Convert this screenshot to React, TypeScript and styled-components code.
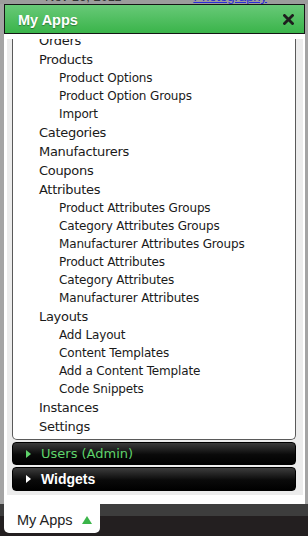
import React from "react";
import styled, { createGlobalStyle } from "styled-components";

const GlobalStyle = createGlobalStyle`
  html, body { margin: 0; padding: 0; }
  body {
    width: 308px;
    height: 536px;
    overflow: hidden;
    background: #a4a4a4;
    font-family: "DejaVu Sans", "Liberation Sans", sans-serif;
  }
`;

const Page = styled.div`
  display: flex;
  flex-direction: column;
  height: 536px;
`;

const BehindStrip = styled.div`
  height: 4px;
  overflow: hidden;
  background: #9c9c9c;
`;

const BehindRow = styled.div`
  display: flex;
  margin-top: -10px;
  height: 14px;
  font-family: "Liberation Sans", sans-serif;
  font-size: 13px;
  line-height: 14px;
`;

const BehindDate = styled.span`
  margin-left: 45px;
  color: #333;
`;

const BehindLink = styled.span`
  margin-left: 72px;
  color: #2b2bd6;
  text-decoration: underline;
`;

const Popup = styled.div`
  margin-left: 4px;
  width: 301px;
  display: flex;
  flex-direction: column;
`;

const Header = styled.div`
  box-sizing: border-box;
  height: 30px;
  border: 1px solid #151515;
  background: linear-gradient(#68c978, #3ab44a);
  display: flex;
  align-items: center;
  justify-content: space-between;
  padding: 1px 10px 0 13px;
`;

const Title = styled.span`
  color: #fff;
  font-family: "Liberation Sans", sans-serif;
  font-weight: bold;
  font-size: 14.5px;
  text-shadow: 0 1px 1px rgba(0, 0, 0, 0.35);
`;

const Body = styled.div`
  background: #fff;
  padding: 5px 2px 9px 3px;
`;

const Inner = styled.div`
  background: #ececec;
  padding: 0 7px 4px 5px;
  display: flex;
  flex-direction: column;
  gap: 2px;
`;

const ListBox = styled.div`
  height: 401px;
  box-sizing: border-box;
  border: 1px solid #5a5a5a;
  border-top: none;
  border-radius: 0 0 5px 5px;
  background: #fff;
  overflow: hidden;
`;

const List = styled.ul`
  list-style: none;
  margin: -8px 0 0 0;
  padding: 0;
`;

const Item = styled.li<{ $sub?: boolean }>`
  color: #1a1a1a;
  font-size: ${(p) => (p.$sub ? "12px" : "13px")};
  line-height: ${(p) => (p.$sub ? "18px" : "19px")};
  letter-spacing: ${(p) => (p.$sub ? "-0.15px" : "-0.3px")};
  padding-left: ${(p) => (p.$sub ? "46px" : "26px")};
  white-space: nowrap;
`;

const Bar = styled.div<{ $active?: boolean }>`
  box-sizing: border-box;
  height: ${(p) => (p.$active ? "23px" : "24px")};
  border-radius: 4px;
  border: 1px solid #000;
  background: linear-gradient(#3c3c3c, #0a0a0a 55%, #000);
  display: flex;
  align-items: center;
  padding-left: 13px;
  gap: 10px;
  color: ${(p) => (p.$active ? "#5fd36b" : "#fff")};
  font-family: ${(p) => (p.$active ? `"DejaVu Sans", sans-serif` : `"Liberation Sans", sans-serif`)};
  font-size: ${(p) => (p.$active ? "13px" : "14px")};
  font-weight: ${(p) => (p.$active ? "normal" : "bold")};
`;

const Arrow = styled.span<{ $active?: boolean }>`
  width: 0;
  height: 0;
  border-top: 4px solid transparent;
  border-bottom: 4px solid transparent;
  border-left: 5px solid ${(p) => (p.$active ? "#5fd36b" : "#fff")};
`;

const Footer = styled.div`
  flex: 1;
  display: flex;
  align-items: flex-start;
  background: linear-gradient(#3d3d3d 0, #3d3d3d 12px, #231f20 12px);
`;

const Tab = styled.div`
  margin-left: 4px;
  width: 96px;
  height: 29px;
  box-sizing: border-box;
  background: #fff;
  border-radius: 0 0 5px 5px;
  display: flex;
  align-items: center;
  padding: 2px 0 0 13px;
  gap: 9px;
  color: #222;
  font-family: "Liberation Sans", sans-serif;
  font-size: 14.5px;
`;

const UpArrow = styled.span`
  width: 0;
  height: 0;
  border-left: 5px solid transparent;
  border-right: 5px solid transparent;
  border-bottom: 8px solid #3bb54a;
`;

const CloseIcon = () => (
  <svg width="11" height="11" viewBox="0 0 11 11">
    <path d="M1.5 1.5 L9.5 9.5 M9.5 1.5 L1.5 9.5" stroke="#1e1e1e" strokeWidth="2.8" strokeLinecap="square" />
  </svg>
);

const items: [string, boolean][] = [
  ["Orders", false],
  ["Products", false],
  ["Product Options", true],
  ["Product Option Groups", true],
  ["Import", true],
  ["Categories", false],
  ["Manufacturers", false],
  ["Coupons", false],
  ["Attributes", false],
  ["Product Attributes Groups", true],
  ["Category Attributes Groups", true],
  ["Manufacturer Attributes Groups", true],
  ["Product Attributes", true],
  ["Category Attributes", true],
  ["Manufacturer Attributes", true],
  ["Layouts", false],
  ["Add Layout", true],
  ["Content Templates", true],
  ["Add a Content Template", true],
  ["Code Snippets", true],
  ["Instances", false],
  ["Settings", false],
];

export default function App() {
  return (
    <>
      <GlobalStyle />
      <Page>
        <BehindStrip>
          <BehindRow>
            <BehindDate>Nov 16, 2011</BehindDate>
            <BehindLink>Photography</BehindLink>
          </BehindRow>
        </BehindStrip>
        <Popup>
          <Header>
            <Title>My Apps</Title>
            <CloseIcon />
          </Header>
          <Body>
            <Inner>
              <ListBox>
                <List>
                  {items.map(([label, sub]) => (
                    <Item key={label} $sub={sub}>
                      {label}
                    </Item>
                  ))}
                </List>
              </ListBox>
              <Bar $active>
                <Arrow $active />
                Users (Admin)
              </Bar>
              <Bar>
                <Arrow />
                Widgets
              </Bar>
            </Inner>
          </Body>
        </Popup>
        <Footer>
          <Tab>
            My Apps
            <UpArrow />
          </Tab>
        </Footer>
      </Page>
    </>
  );
}
